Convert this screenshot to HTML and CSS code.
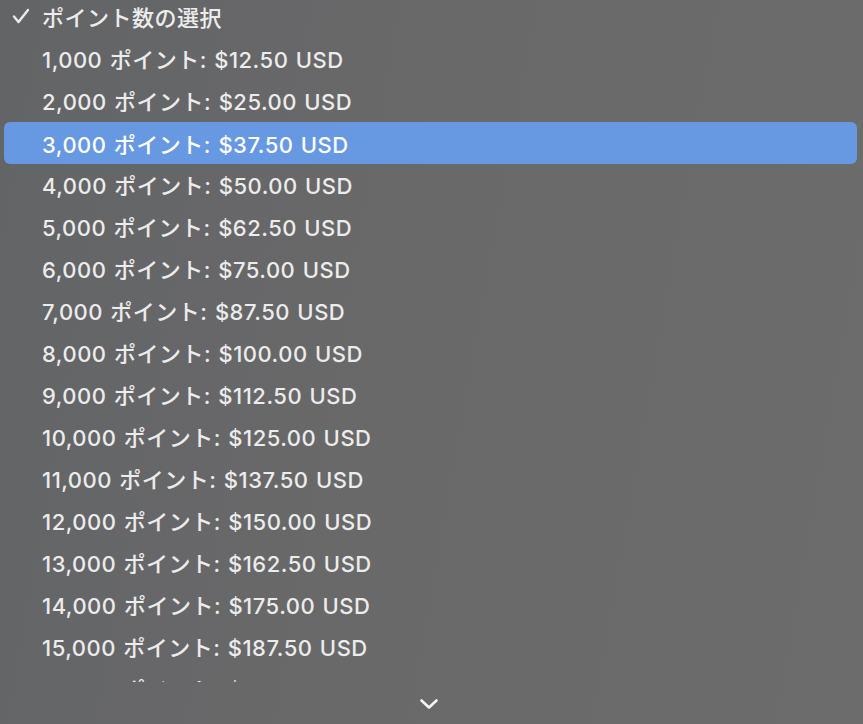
FILE: index.html
```html
<!DOCTYPE html>
<html lang="ja">
<head>
	<meta charset="UTF-8">
	<title>ポイント数の選択</title>
	<link rel="stylesheet" href="styles.css">
</head>
<body>
	<div class="menu">
		<div class="viewport">
			<ul class="options">
				<li class="option checked">
					<span class="mark">
						<svg width="18" height="16" viewBox="0 0 18 16"><path d="M2 8.5 L6.5 14 L16 2" fill="none" stroke="#ececec" stroke-width="2.4" stroke-linecap="round" stroke-linejoin="round"/></svg>
					</span>
					<span class="label">ポイント数の選択</span>
				</li>
				<li class="option"><span class="mark"></span><span class="label">1,000 ポイント: $12.50 USD</span></li>
				<li class="option"><span class="mark"></span><span class="label">2,000 ポイント: $25.00 USD</span></li>
				<li class="option active"><span class="mark"></span><span class="label">3,000 ポイント: $37.50 USD</span></li>
				<li class="option"><span class="mark"></span><span class="label">4,000 ポイント: $50.00 USD</span></li>
				<li class="option"><span class="mark"></span><span class="label">5,000 ポイント: $62.50 USD</span></li>
				<li class="option"><span class="mark"></span><span class="label">6,000 ポイント: $75.00 USD</span></li>
				<li class="option"><span class="mark"></span><span class="label">7,000 ポイント: $87.50 USD</span></li>
				<li class="option"><span class="mark"></span><span class="label">8,000 ポイント: $100.00 USD</span></li>
				<li class="option"><span class="mark"></span><span class="label">9,000 ポイント: $112.50 USD</span></li>
				<li class="option"><span class="mark"></span><span class="label">10,000 ポイント: $125.00 USD</span></li>
				<li class="option"><span class="mark"></span><span class="label">11,000 ポイント: $137.50 USD</span></li>
				<li class="option"><span class="mark"></span><span class="label">12,000 ポイント: $150.00 USD</span></li>
				<li class="option"><span class="mark"></span><span class="label">13,000 ポイント: $162.50 USD</span></li>
				<li class="option"><span class="mark"></span><span class="label">14,000 ポイント: $175.00 USD</span></li>
				<li class="option"><span class="mark"></span><span class="label">15,000 ポイント: $187.50 USD</span></li>
				<li class="option"><span class="mark"></span><span class="label">16,000 ポイント: $200.00 USD</span></li>
			</ul>
		</div>
		<div class="scroll-down">
			<svg width="20" height="14" viewBox="0 0 20 14"><path d="M2.5 3.5 L10 10.5 L17.5 3.5" fill="none" stroke="#f4f4f4" stroke-width="2.6" stroke-linecap="round" stroke-linejoin="round"/></svg>
		</div>
	</div>
</body>
</html>
```

FILE: styles.css
```css
html, body {
	margin: 0;
	padding: 0;
	height: 100%;
}
body {
	font-family: Inter, "Noto Sans CJK JP", sans-serif;
	background: linear-gradient(100deg, #636466 0%, #69696a 45%, #6c6c6c 100%);
	color: #ececec;
	overflow: hidden;
}
.menu {
	display: flex;
	flex-direction: column;
	height: 724px;
}
.viewport {
	height: 682px;
	overflow: hidden;
}
.options {
	list-style: none;
	margin: -5px 0 0 0;
	padding: 0;
}
.option {
	display: flex;
	align-items: center;
	height: 42px;
	margin: 0 6px 0 4px;
	border-radius: 6px;
	font-size: 22px;
	font-weight: 500;
	letter-spacing: 0.5px;
	word-spacing: 1px;
}
.option.active {
	background-color: #6798e2;
	color: #ffffff;
	margin-top: 1px;
	margin-bottom: -1px;
}
.mark {
	width: 38px;
	flex: none;
	display: flex;
	justify-content: flex-start;
	padding-left: 8px;
	box-sizing: border-box;
}
.mark svg {
	display: block;
}
.scroll-down {
	flex: 1;
	display: flex;
	justify-content: center;
	align-items: center;
	padding-right: 6px;
	padding-top: 1px;
}
```
